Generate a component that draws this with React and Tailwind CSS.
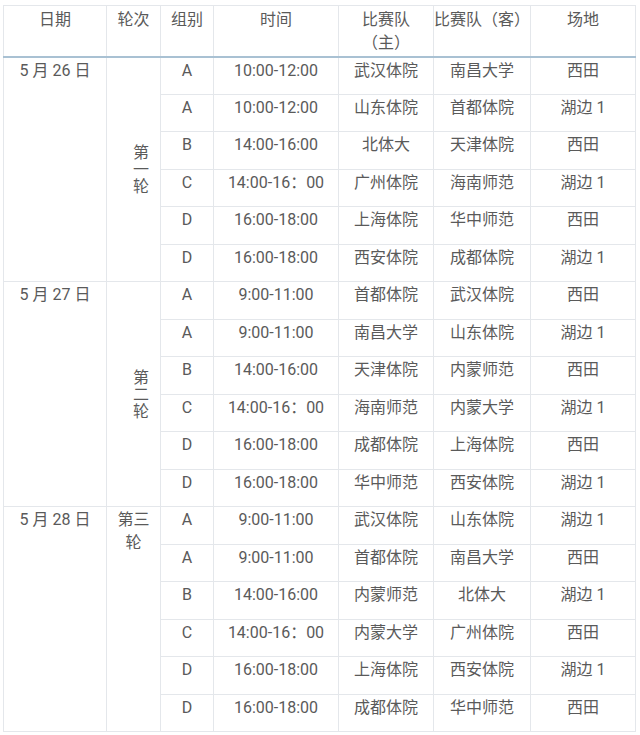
import React from "react";

const rounds = [
  {
    date: "5 月 26 日",
    round: ["第", "一", "轮"],
    stacked: true,
    rows: [
      ["A", "10:00-12:00", "武汉体院", "南昌大学", "西田"],
      ["A", "10:00-12:00", "山东体院", "首都体院", "湖边 1"],
      ["B", "14:00-16:00", "北体大", "天津体院", "西田"],
      ["C", "14:00-16：00", "广州体院", "海南师范", "湖边 1"],
      ["D", "16:00-18:00", "上海体院", "华中师范", "西田"],
      ["D", "16:00-18:00", "西安体院", "成都体院", "湖边 1"],
    ],
  },
  {
    date: "5 月 27 日",
    round: ["第", "二", "轮"],
    stacked: true,
    rows: [
      ["A", "9:00-11:00", "首都体院", "武汉体院", "西田"],
      ["A", "9:00-11:00", "南昌大学", "山东体院", "湖边 1"],
      ["B", "14:00-16:00", "天津体院", "内蒙师范", "西田"],
      ["C", "14:00-16：00", "海南师范", "内蒙大学", "湖边 1"],
      ["D", "16:00-18:00", "成都体院", "上海体院", "西田"],
      ["D", "16:00-18:00", "华中师范", "西安体院", "湖边 1"],
    ],
  },
  {
    date: "5 月 28 日",
    round: ["第三", "轮"],
    stacked: false,
    rows: [
      ["A", "9:00-11:00", "武汉体院", "山东体院", "湖边 1"],
      ["A", "9:00-11:00", "首都体院", "南昌大学", "西田"],
      ["B", "14:00-16:00", "内蒙师范", "北体大", "湖边 1"],
      ["C", "14:00-16：00", "内蒙大学", "广州体院", "西田"],
      ["D", "16:00-18:00", "上海体院", "西安体院", "湖边 1"],
      ["D", "16:00-18:00", "成都体院", "华中师范", "西田"],
    ],
  },
];

const th =
  "border border-[#e4e7eb] border-b-2 border-b-[#a9c1d3] align-top text-center font-normal pt-[2px] px-0 leading-[23px]";
const td =
  "border border-[#e4e7eb] align-top text-center pt-[1px] px-0 leading-[23px]";

export default function App() {
  return (
    <div className="bg-white w-[640px] h-[735px] pt-[5px] pl-[3px] font-['Roboto','Noto_Sans_CJK_SC',sans-serif] text-[16px] text-[#5a5a5a]">
      <table className="table-fixed border-collapse w-[632px]">
        <colgroup>
          <col className="w-[103px]" />
          <col className="w-[54px]" />
          <col className="w-[53px]" />
          <col className="w-[125px]" />
          <col className="w-[95px]" />
          <col className="w-[97px]" />
          <col className="w-[105px]" />
        </colgroup>
        <thead>
          <tr className="h-[51px]">
            <th className={th}>日期</th>
            <th className={th}>轮次</th>
            <th className={th}>组别</th>
            <th className={th}>时间</th>
            <th className={th}>
              比赛队
              <br />
              （主）
            </th>
            <th className={th}>比赛队（客）</th>
            <th className={th}>场地</th>
          </tr>
        </thead>
        <tbody>
          {rounds.map((r, ri) =>
            r.rows.map((row, i) => (
              <tr key={ri + "-" + i} className={i % 2 === 0 ? "h-[38px]" : "h-[37px]"}>
                {i === 0 && (
                  <td rowSpan={6} className={td}>
                    {r.date}
                  </td>
                )}
                {i === 0 &&
                  (r.stacked ? (
                    <td
                      rowSpan={6}
                      className="border border-[#e4e7eb] align-middle text-center pl-[15px] leading-[17px]"
                    >
                      {r.round.map((c, k) => (
                        <div key={k}>{c}</div>
                      ))}
                    </td>
                  ) : (
                    <td rowSpan={6} className={td}>
                      {r.round.map((c, k) => (
                        <div key={k}>{c}</div>
                      ))}
                    </td>
                  ))}
                {row.map((c, k) => (
                  <td key={k} className={td}>
                    {c}
                  </td>
                ))}
              </tr>
            ))
          )}
        </tbody>
      </table>
    </div>
  );
}
